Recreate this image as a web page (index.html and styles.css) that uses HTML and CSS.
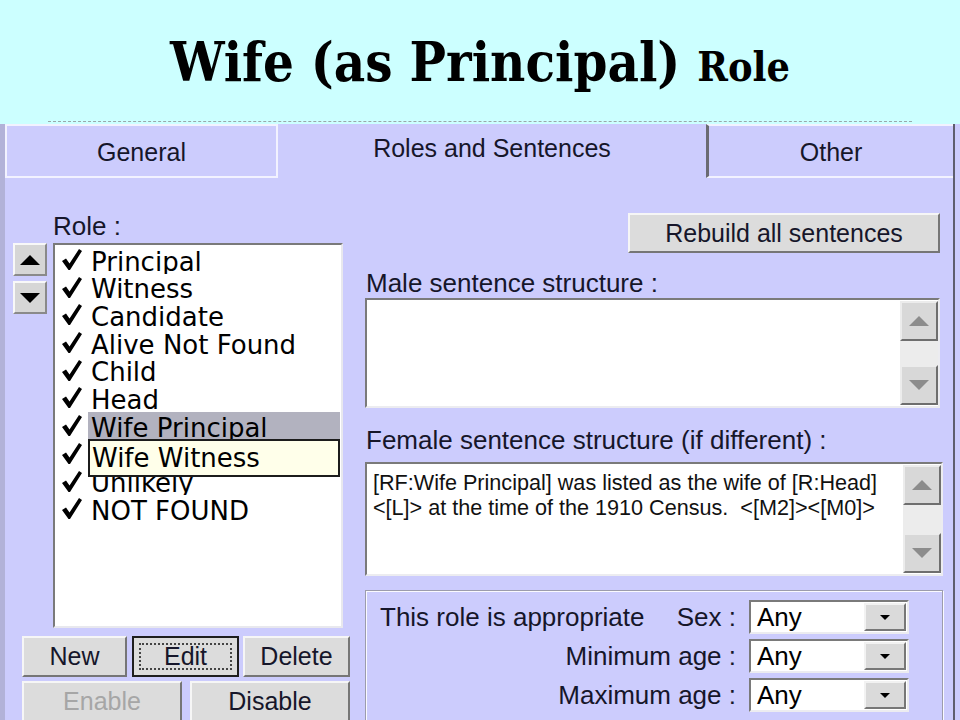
FILE: index.html
```html
<!DOCTYPE html>
<html lang="en">
<head>
    <meta charset="UTF-8">
    <title>Wife (as Principal) Role</title>
    <link rel="stylesheet" href="styles.css">
</head>
<body>
    <svg class="defs" width="0" height="0">
        <symbol id="tick" viewBox="0 0 20 22">
            <path d="M0 12 L4 9.5 L7.5 14.5 L17 0 L20 2 L8 21 L6.5 21 Z"/>
        </symbol>
    </svg>

    <header class="slide-title">
        <h1>Wife (as Principal) <span class="small">Role</span></h1>
        <div class="rule"></div>
    </header>

    <div class="window">
        <div class="edge"></div>
        <div class="dialog">
            <div class="tabs">
                <div class="tab tab-general">General</div>
                <div class="tab tab-active">Roles and Sentences</div>
                <div class="tab tab-other">Other</div>
            </div>

            <div class="pane">
                <div class="left-col">
                    <div class="label role-label">Role :</div>
                    <div class="role-row">
                        <div class="movers">
                            <div class="mover"><svg width="20" height="10" viewBox="0 0 20 10"><path d="M0 10 L10 0 L20 10 Z"/></svg></div>
                            <div class="mover"><svg width="20" height="10" viewBox="0 0 20 10"><path d="M0 0 L20 0 L10 10 Z"/></svg></div>
                        </div>
                        <div class="listbox">
                            <div class="item"><svg class="check"><use href="#tick"/></svg><span class="name">Principal</span></div>
                            <div class="item"><svg class="check"><use href="#tick"/></svg><span class="name">Witness</span></div>
                            <div class="item"><svg class="check"><use href="#tick"/></svg><span class="name">Candidate</span></div>
                            <div class="item"><svg class="check"><use href="#tick"/></svg><span class="name">Alive Not Found</span></div>
                            <div class="item"><svg class="check"><use href="#tick"/></svg><span class="name">Child</span></div>
                            <div class="item"><svg class="check"><use href="#tick"/></svg><span class="name">Head</span></div>
                            <div class="item"><svg class="check"><use href="#tick"/></svg><span class="name selected">Wife Principal</span></div>
                            <div class="item"><svg class="check"><use href="#tick"/></svg><span class="name">Wife Witness</span></div>
                            <div class="item"><svg class="check"><use href="#tick"/></svg><span class="name">Unlikely</span></div>
                            <div class="item"><svg class="check"><use href="#tick"/></svg><span class="name">NOT FOUND</span></div>
                            <div class="inplace-edit">Wife Witness</div>
                        </div>
                    </div>
                    <div class="btn-row">
                        <div class="btn btn-new">New</div>
                        <div class="btn btn-edit"><span class="focus">Edit</span></div>
                        <div class="btn btn-delete">Delete</div>
                    </div>
                    <div class="btn-row">
                        <div class="btn btn-wide disabled">Enable</div>
                        <div class="btn btn-wide">Disable</div>
                    </div>
                </div>

                <div class="right-col">
                    <div class="rebuild-row">
                        <div class="btn btn-rebuild">Rebuild all sentences</div>
                    </div>
                    <div class="label field-label">Male sentence structure :</div>
                    <div class="textbox male-box">
                        <div class="text"></div>
                        <div class="vscroll">
                            <div class="sbtn"><svg width="20" height="10" viewBox="0 0 20 10"><path d="M0 10 L10 0 L20 10 Z"/></svg></div>
                            <div class="track"></div>
                            <div class="sbtn"><svg width="20" height="10" viewBox="0 0 20 10"><path d="M0 0 L20 0 L10 10 Z"/></svg></div>
                        </div>
                    </div>
                    <div class="label field-label female-label">Female sentence structure (if different) :</div>
                    <div class="textbox female-box">
                        <div class="text">[RF:Wife Principal] was listed as the wife of [R:Head]<br>&lt;[L]&gt; at the time of the 1910 Census.&nbsp; &lt;[M2]&gt;&lt;[M0]&gt;</div>
                        <div class="vscroll">
                            <div class="sbtn"><svg width="20" height="10" viewBox="0 0 20 10"><path d="M0 10 L10 0 L20 10 Z"/></svg></div>
                            <div class="track"></div>
                            <div class="sbtn"><svg width="20" height="10" viewBox="0 0 20 10"><path d="M0 0 L20 0 L10 10 Z"/></svg></div>
                        </div>
                    </div>

                    <div class="group">
                        <div class="cond-row">
                            <div class="cond-label first"><span>This role is appropriate</span><span>Sex :</span></div>
                            <div class="combo"><span>Any</span><div class="drop"><svg width="10" height="5" viewBox="0 0 10 5"><path d="M0 0 L10 0 L5 5 Z"/></svg></div></div>
                        </div>
                        <div class="cond-row">
                            <div class="cond-label">Minimum age :</div>
                            <div class="combo"><span>Any</span><div class="drop"><svg width="10" height="5" viewBox="0 0 10 5"><path d="M0 0 L10 0 L5 5 Z"/></svg></div></div>
                        </div>
                        <div class="cond-row">
                            <div class="cond-label">Maximum age :</div>
                            <div class="combo"><span>Any</span><div class="drop"><svg width="10" height="5" viewBox="0 0 10 5"><path d="M0 0 L10 0 L5 5 Z"/></svg></div></div>
                        </div>
                    </div>
                </div>
            </div>
        </div>
    </div>
</body>
</html>
```

FILE: styles.css
```css
body {
    margin: 0;
    width: 960px;
    height: 720px;
    overflow: hidden;
    font-family: 'Liberation Sans', Arial, sans-serif;
    color: #16162a;
}
.defs {
    position: absolute;
}
.slide-title {
    height: 124px;
    background-color: #ccffff;
    display: flex;
    flex-direction: column;
}
.slide-title h1 {
    margin: 0;
    padding-top: 32px;
    text-align: center;
    font-family: 'DejaVu Serif Condensed', 'DejaVu Serif', serif;
    font-weight: bold;
    font-size: 54px;
    line-height: 60px;
    color: #000;
}
.slide-title h1 .small {
    font-size: 41px;
}
.rule {
    margin: auto 48px 2px;
    border-top: 1px dashed #9aa8aa;
}
.window {
    height: 596px;
    display: flex;
    background-color: #ccccfd;
}
.edge {
    width: 5px;
    background-color: #b2b2d8;
}
.dialog {
    width: 948px;
    border-right: 2px solid #5e5e6e;
    display: flex;
    flex-direction: column;
}
.tabs {
    height: 54px;
    flex: none;
    display: flex;
}
.tab {
    font-size: 25px;
    display: flex;
    justify-content: center;
    align-items: center;
    box-sizing: border-box;
}
.tab-general {
    width: 273px;
    border: 2px solid #f2f2ff;
    padding-top: 2px;
}
.tab-active {
    width: 428px;
    padding-bottom: 6px;
}
.tab-other {
    flex: 1;
    border-top: 2px solid #f2f2ff;
    border-bottom: 2px solid #f2f2ff;
    border-left: 3px solid #6a6a72;
    padding-top: 2px;
}
.pane {
    flex: 1;
    display: flex;
    overflow: hidden;
}
.label {
    font-size: 26px;
}
.left-col {
    width: 350px;
}
.role-label {
    padding: 33px 0 0 48px;
    height: 32px;
}
.role-row {
    display: flex;
    align-items: flex-start;
    gap: 6px;
    padding-left: 8px;
}
.movers {
    display: flex;
    flex-direction: column;
    gap: 5px;
}
.mover {
    width: 34px;
    height: 33px;
    box-sizing: border-box;
    background-color: #d6d6d6;
    border: 2px solid;
    border-color: #f8f8f8 #8a8a8a #8a8a8a #f8f8f8;
    display: flex;
    justify-content: center;
    align-items: center;
}
.mover svg {
    fill: #000;
}
.listbox {
    position: relative;
    width: 290px;
    height: 385px;
    box-sizing: border-box;
    background-color: #fff;
    border: 2px solid;
    border-color: #7a7a7a #e8e8ee #e8e8ee #7a7a7a;
    padding: 1px 1px 0 0;
    font-family: 'DejaVu Sans', Verdana, sans-serif;
    font-size: 26px;
}
.item {
    height: 27.7px;
    display: flex;
    overflow: hidden;
    color: #000;
}
.check {
    width: 20px;
    height: 22px;
    margin: 3px 0 0 7px;
    flex: none;
    fill: #000;
}
.name {
    flex: 1;
    margin-left: 6px;
    padding: 2.5px 0 0 3px;
    line-height: 27.7px;
    white-space: nowrap;
}
.name.selected {
    background-color: #b2b2bf;
}
.inplace-edit {
    position: absolute;
    left: 33px;
    top: 194px;
    width: 252px;
    height: 38px;
    box-sizing: border-box;
    border: 2px solid #1c1c1c;
    background-color: #ffffea;
    padding-left: 2px;
    line-height: 34px;
    color: #000;
}
.btn {
    box-sizing: border-box;
    background-color: #dcdcdc;
    border: 2px solid;
    border-color: #f6f6f6 #767676 #767676 #f6f6f6;
    font-size: 25px;
    display: flex;
    justify-content: center;
    align-items: center;
}
.btn-row {
    display: flex;
    padding-left: 17px;
    margin-top: 8px;
}
.btn-row + .btn-row {
    margin-top: 4px;
}
.btn-row .btn {
    height: 41px;
}
.btn-new {
    width: 105px;
}
.btn-edit {
    width: 107px;
    margin-left: 5px;
    border: 2px solid #1e1e1e;
    padding: 5px;
}
.btn-edit .focus {
    flex: 1;
    align-self: stretch;
    border: 2px dotted #444;
    display: flex;
    justify-content: center;
    align-items: center;
}
.btn-delete {
    width: 107px;
    margin-left: 4px;
}
.btn-wide {
    width: 160px;
}
.btn-wide + .btn-wide {
    margin-left: 8px;
}
.btn.disabled {
    color: #a6a6a6;
}
.right-col {
    flex: 1;
    padding-left: 10px;
}
.rebuild-row {
    display: flex;
    justify-content: flex-end;
    padding: 35px 13px 0 0;
}
.btn-rebuild {
    width: 312px;
    height: 40px;
}
.field-label {
    height: 30px;
    padding-top: 15px;
    padding-left: 1px;
}
.female-label {
    padding-top: 17px;
    height: 37px;
}
.textbox {
    display: flex;
    box-sizing: border-box;
    background-color: #fff;
    border: 2px solid;
    border-color: #7a7a7a #ececf0 #ececf0 #7a7a7a;
}
.male-box {
    width: 575px;
    height: 110px;
}
.female-box {
    width: 578px;
    height: 114px;
}
.textbox .text {
    flex: 1;
    padding: 6px 6px 0 6px;
    font-size: 21.6px;
    line-height: 25px;
    color: #111;
    white-space: nowrap;
}
.vscroll {
    width: 38px;
    display: flex;
    flex-direction: column;
    padding: 1px 0;
}
.sbtn {
    height: 40px;
    box-sizing: border-box;
    background-color: #d8d8d8;
    border: 2px solid;
    border-color: #ececec #6e6e6e #6e6e6e #ececec;
    display: flex;
    justify-content: center;
    align-items: center;
}
.sbtn svg {
    fill: #8c8c8c;
}
.track {
    flex: 1;
    background-color: #ececec;
}
.group {
    margin-top: 14px;
    width: 578px;
    height: 140px;
    box-sizing: border-box;
    border: 1px solid #9c9cac;
    box-shadow: inset 1px 1px 0 #fafaff, 1px 1px 0 #fafaff;
    padding: 9px 33px 0 14px;
}
.cond-row {
    display: flex;
    align-items: center;
    gap: 13px;
    height: 34px;
    margin-bottom: 5px;
}
.cond-label {
    flex: 1;
    text-align: right;
    font-size: 26px;
}
.cond-label.first {
    display: flex;
    justify-content: space-between;
}
.combo {
    width: 160px;
    height: 34px;
    box-sizing: border-box;
    background-color: #fff;
    border: 2px solid;
    border-color: #7a7a7a #ececf0 #ececf0 #7a7a7a;
    display: flex;
    align-items: center;
    padding-left: 6px;
    font-size: 26px;
    color: #000;
}
.combo span {
    flex: 1;
}
.drop {
    width: 42px;
    height: 28px;
    margin-right: 1px;
    box-sizing: border-box;
    background-color: #dadada;
    border: 2px solid;
    border-color: #f2f2f2 #777 #777 #f2f2f2;
    display: flex;
    justify-content: center;
    align-items: center;
}
```
